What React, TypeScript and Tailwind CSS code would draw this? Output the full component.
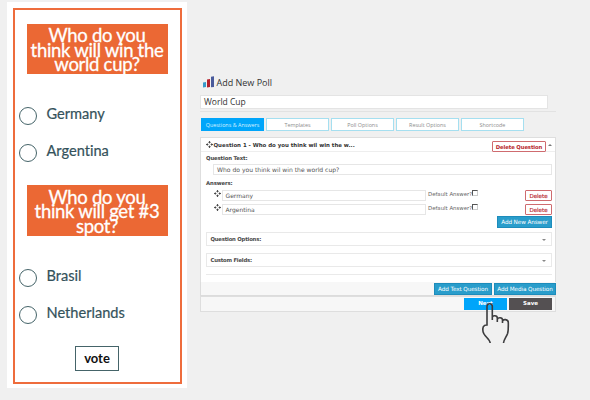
import React from "react";

const dejavu = "font-['DejaVu_Sans',Verdana,sans-serif]";

function Move() {
  return (
    <svg viewBox="0 0 12 12" className="h-[7px] w-[7px] shrink-0" fill="none" stroke="#444" strokeWidth="1.7">
      <path d="M6 0.5v3.5M6 8v3.5M0.5 6H4M8 6h3.5M4.2 2.4L6 .7l1.8 1.7M4.2 9.6L6 11.3l1.8-1.7M2.4 4.2L.7 6l1.7 1.8M9.6 4.2L11.3 6 9.6 7.8" />
    </svg>
  );
}

function Choice({ label, className }: { label: string; className: string }) {
  return (
    <div className={`flex h-[22px] items-start pl-[4px] ${className}`}>
      <span className="mt-[3px] h-[18px] w-[18px] shrink-0 rounded-full border-[1.5px] border-[#456469]" />
      <span className="ml-[9.5px] whitespace-nowrap text-[14.6px] leading-[20px] text-[#34525b] [font-variant-ligatures:none] [-webkit-text-stroke:0.2px_#34525b]">{label}</span>
    </div>
  );
}

function Heading({ lines }: { lines: string[] }) {
  return (
    <div className="ml-[11.5px] h-[50.5px] w-[141px] bg-[#eb6834] pt-[4.5px] text-center text-[18.5px] leading-[14.6px] tracking-[-0.3px] text-white [-webkit-text-stroke:0.3px_white]">
      {lines.map((l) => (
        <div key={l} className="whitespace-nowrap">{l}</div>
      ))}
    </div>
  );
}

function PollCard() {
  return (
    <div className="ml-[7px] mt-[2px] h-[386px] w-[180px] shrink-0 bg-white pl-[6px] pt-[5.5px] font-[Lato,sans-serif]">
      <div className="h-[376px] w-[169px] border-2 border-[#ee6c3c] pt-[14px]">
        <Heading lines={["Who do you", "think will win the", "world cup?"]} />
        <Choice label="Germany" className="mt-[30px]" />
        <Choice label="Argentina" className="mt-[15px]" />
        <div className="h-[22px]" />
        <Heading lines={["Who do you", "think will get #3", "spot?"]} />
        <Choice label="Brasil" className="mt-[30px]" />
        <Choice label="Netherlands" className="mt-[15px]" />
        <div className="ml-[60px] mt-[21px] flex h-[25px] w-[44px] items-center justify-center border-[1.5px] border-[#456469] text-[13px] font-bold leading-none text-[#111]">
          vote
        </div>
      </div>
    </div>
  );
}

function Tab({ label, active }: { label: string; active?: boolean }) {
  return (
    <div
      className={`flex h-[13px] w-[63px] items-center justify-center whitespace-nowrap border pt-[1.5px] font-['Open_Sans',sans-serif] text-[5.4px] leading-none ${
        active ? "border-[#00a5fa] bg-[#00a5fa] text-[#d8f1ff]" : "border-[#a5dff0] bg-white text-[#8c8c8c]"
      }`}
    >
      {label}
    </div>
  );
}

function Delete() {
  return (
    <div className="ml-auto flex h-[11px] w-[27px] items-center justify-center rounded-[1px] border border-[#cf6b6f] bg-white pt-[2px] text-[5.5px] leading-none text-[#b8282e] [-webkit-text-stroke:0.15px_#b8282e]">
      Delete
    </div>
  );
}

function Answer({ name, className }: { name: string; className: string }) {
  return (
    <div className={`flex h-[11px] items-start ${className}`}>
      <div className="ml-[8px]"><Move /></div>
      <div className="ml-[1px] flex h-[11px] w-[204px] items-center border border-[#e6e6e6] bg-white pl-[2.5px] text-[6px] leading-none text-[#555]">{name}</div>
      <span className="ml-[2px] mt-[1px] w-[45px] whitespace-nowrap text-[5.4px] leading-[6px] text-[#666]">Default Answer?</span>
      <span className="-ml-px h-[6px] w-[6px] border border-[#ccc] border-l-[#555] border-t-[#555] bg-white" />
      <Delete />
    </div>
  );
}

function Fold({ label, className }: { label: string; className: string }) {
  return (
    <div className={`flex h-[14px] items-center justify-between border border-[#e9e9e9] pl-[3.5px] pr-[5px] pt-[2px] text-[5.3px] font-bold leading-none tracking-[-0.2px] text-[#484848] ${className}`}>
      <span>{label}</span>
      <span className="h-0 w-0 border-x-2 border-t-2 border-x-transparent border-t-[#888]" />
    </div>
  );
}

function Blue({ label, className }: { label: string; className: string }) {
  return (
    <div className={`flex h-[11.5px] items-center justify-center whitespace-nowrap border border-[#1d8cbb] bg-[#299dcb] pt-[2px] text-[5.7px] leading-none tracking-[-0.1px] text-white ${className}`}>
      {label}
    </div>
  );
}

function Editor() {
  return (
    <div className="ml-[13px] w-[356px] shrink-0 pt-[76px] text-[#444]">
      <div className="flex h-[14px] items-start pl-[3px] font-['Open_Sans',sans-serif]">
        <svg width="12" height="12" viewBox="0 0 12 12">
          <path d="M0 6.500L3 6v5L0 11.500z" fill="#3899c9" />
          <path d="M4 3.500L7 3v8L4 11.500z" fill="#b5202b" />
          <path d="M8 .7L11 .2V11L8 11.300z" fill="#495a9b" />
        </svg>
        <span className="ml-[1.5px] whitespace-nowrap text-[9px] leading-[14px] text-[#333]">Add New Poll</span>
      </div>
      <div className="mt-[5px] flex h-[14px] w-[348px] items-center border border-[#e4e4e4] bg-white pl-[3px] pt-px font-['Open_Sans',sans-serif] text-[8.5px] leading-none text-[#333]">World Cup</div>
      <div className="mt-[2px] h-px bg-[#e2e2e2]" />
      <div className="ml-px mt-[6px] flex gap-[2px]">
        <Tab label="Questions & Answers" active />
        <Tab label="Templates" />
        <Tab label="Poll Options" />
        <Tab label="Result Options" />
        <Tab label="Shortcode" />
      </div>
      <div className={`mt-[6px] h-[145px] border border-b-0 border-[#dedede] bg-white ${dejavu}`}>
        <div className="flex h-[14px] items-start border-b border-[#eeeeee] pl-[5px] pr-[3px]">
          <div className="mt-[3px]"><Move /></div>
          <span className="ml-[0.5px] mt-[4px] whitespace-nowrap text-[5.45px] font-bold leading-[7px] text-[#333]">Question 1 - Who do you think wil win the w...</span>
          <div className="ml-auto mt-[3px] flex h-[11px] w-[54px] shrink-0 items-center justify-center rounded-[1px] border border-[#cf6b6f] bg-white pt-[2px] text-[5.3px] font-bold leading-none tracking-[-0.12px] text-[#b8282e]">Delete Question</div>
          <span className="ml-[2px] mt-[6px] h-0 w-0 border-x-2 border-b-2 border-x-transparent border-b-[#777]" />
        </div>
        <div className="pl-[5px] pr-[3px]">
          <div className="mt-[3px] h-[9px] text-[5.3px] font-bold leading-[7px] tracking-[-0.12px]">Question Text:</div>
          <div className="ml-[7px] flex h-[11px] items-center border border-[#e6e6e6] pl-[3px] pt-px text-[6.05px] leading-none text-[#555]">Who do you think wil win the world cup?</div>
          <div className="mt-[5px] h-[8px] text-[5.3px] font-bold leading-[7px] tracking-[-0.12px]">Answers:</div>
          <Answer name="Germany" className="mt-[2px]" />
          <Answer name="Argentina" className="mt-[3px]" />
          <Blue label="Add New Answer" className="ml-auto mt-px w-[55px]" />
          <Fold label="Question Options:" className="mt-[4.5px]" />
          <Fold label="Custom Fields:" className="mt-[7px]" />
          <div className="mt-[7px] h-px bg-[#eaeaea]" />
        </div>
      </div>
      <div className={`flex h-[14px] justify-end gap-[2px] border-b border-l border-[#dcdcdc] bg-[#f7f7f7] pt-px ${dejavu}`}>
        <Blue label="Add Text Question" className="w-[58px]" />
        <Blue label="Add Media Question" className="w-[62px]" />
      </div>
      <div className={`relative flex h-[16px] justify-end gap-[2px] border border-[#dedede] bg-[#f7f7f7] pr-[3px] pt-[1px] text-[5.5px] font-bold leading-none text-white ${dejavu}`}>
        <div className="flex h-[11.5px] w-[43px] items-center justify-center bg-[#00a5fa]">Next</div>
        <div className="flex h-[11.5px] w-[43px] items-center justify-center bg-[#545052]">Save</div>
        <svg className="absolute left-[280px] top-[5px]" width="30" height="42" viewBox="0 0 30 42">
          <path d="M9.2 41C8.8 36.5 2.5 34 2 29.5C1.5 26 1.800 23 6 23V4.300C6 .8 11.300 .8 11.300 4.300V18M11.300 15.500C11.500 13 16.300 13 16.300 16V20M16.300 17.500C16.800 15 21.500 15.200 21.500 18V21M21.500 19.300C22 16.800 27.300 17 27.300 20.500C27.300 24 27.600 28 26.600 31.500C25.300 35 23 37 22.500 41" fill="none" stroke="#3c3c3e" strokeWidth="1.600" />
        </svg>
      </div>
    </div>
  );
}

export default function App() {
  return (
    <div className="flex h-[400px] w-[590px] items-start overflow-hidden bg-[#f0f0f0]">
      <PollCard />
      <Editor />
    </div>
  );
}
